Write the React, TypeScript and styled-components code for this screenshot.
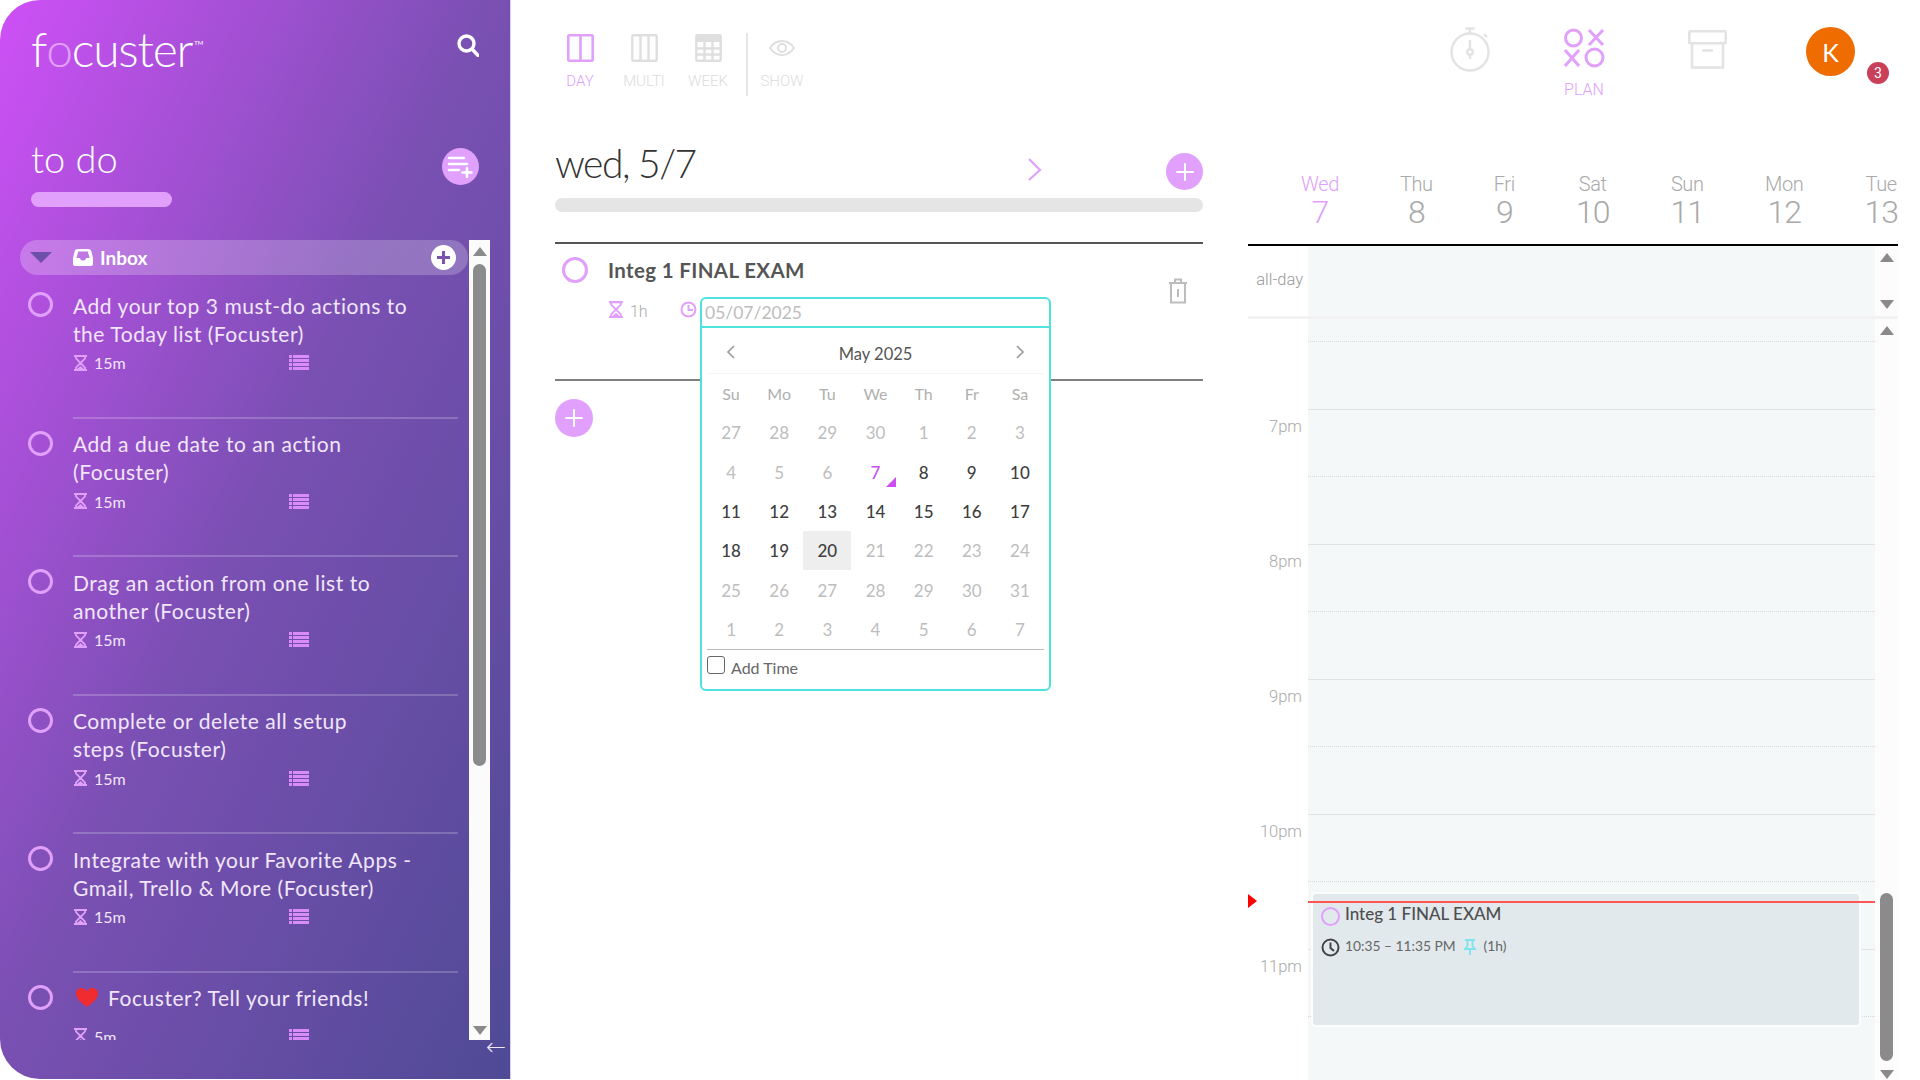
import React from "react";
import styled, { createGlobalStyle } from "styled-components";

const Global = createGlobalStyle`
  html, body { margin: 0; padding: 0; background: #fff; }
  body { font-family: "Lato", "Open Sans", sans-serif; }
  * { box-sizing: border-box; }
`;

const PINK = "#e0a0fb";
const TEAL = "#4fe3e0";
const DIN = `"Roboto", "Liberation Sans", sans-serif`;

const Page = styled.div`
  display: flex;
  width: 1920px;
  height: 1080px;
  overflow: hidden;
  background: #fff;
`;

/* ---------- Sidebar ---------- */
const Sidebar = styled.aside`
  flex: 0 0 511px;
  height: 1079px;
  display: flex;
  flex-direction: column;
  color: #fff;
  border-right: 1px solid #d9cdf0;
  border-radius: 40px 0 0 40px;
  background: linear-gradient(to bottom right, #cf50f7 0%, #7a50b3 48%, #4f4a95 100%);
`;
const SideHeader = styled.div`
  height: 100px;
  padding: 17px 31px 0 31px;
  display: flex;
  justify-content: space-between;
  align-items: flex-start;
`;
const Logo = styled.div`
  font-size: 48px;
  line-height: 64px;
  font-weight: 300;
  letter-spacing: -1.2px;
  color: #fff;
  display: flex;
`;
const LogoO = styled.span`
  color: #e0a0fb;
`;
const Tm = styled.sup`
  font-size: 6px;
  line-height: 7px;
  letter-spacing: 0;
  margin: 22px 0 0 2px;
  font-weight: 400;
`;
const SearchBtn = styled.span`
  display: flex;
  margin-top: 17px;
`;
const TodoRow = styled.div`
  height: 140px;
  padding: 0 31px;
  display: flex;
  justify-content: space-between;
  align-items: flex-start;
`;
const TodoTitle = styled.h1`
  margin: 36px 0 12px;
  font-size: 38px;
  line-height: 44px;
  font-weight: 300;
`;
const TodoPill = styled.div`
  width: 141px;
  height: 15px;
  border-radius: 8px;
  background: ${PINK};
`;
const AddListBtn = styled.span`
  width: 37px;
  height: 37px;
  margin-top: 48px;
  border-radius: 50%;
  background: ${PINK};
  display: flex;
  align-items: center;
  justify-content: center;
`;
const ListWrap = styled.div`
  display: flex;
  height: 800px;
  margin-left: 20px;
`;
const ListArea = styled.div`
  width: 449px;
  overflow: hidden;
`;
const InboxBar = styled.div`
  height: 35px;
  width: 448px;
  border-radius: 18px;
  padding: 0 12px 0 10px;
  display: flex;
  align-items: center;
  background: linear-gradient(90deg, rgba(255,255,255,.24), rgba(255,255,255,.2) 70%, rgba(255,255,255,.22));
`;
const InboxCaret = styled.span`
  width: 0;
  height: 0;
  border-left: 11px solid transparent;
  border-right: 11px solid transparent;
  border-top: 11px solid #6c50a9;
  margin-right: 21px;
`;
const InboxName = styled.span`
  font-size: 19px;
  font-weight: 700;
  margin-left: 7px;
  margin-top: -1px;
  flex: 1;
`;
const Items = styled.div`
  padding-top: 2px;
`;
const Item = styled.div`
  display: flex;
  height: 138.5px;
  padding-left: 8px;
`;
const Ring = styled.span<{ $size: number; $w: number }>`
  flex: none;
  display: block;
  width: ${(p) => p.$size}px;
  height: ${(p) => p.$size}px;
  border: ${(p) => p.$w}px solid ${PINK};
  border-radius: 50%;
`;
const ItemRing = styled(Ring)`
  margin-top: 15px;
  margin-right: 20px;
`;
const ItemBody = styled.div`
  flex: 1;
  height: 141.5px;
  margin-right: 11px;
  padding-top: 14px;
  border-bottom: 2px solid rgba(255, 255, 255, 0.2);
`;
const ItemLine = styled.div<{ $gap?: boolean }>`
  display: flex;
  align-items: center;
  height: 28px;
  margin-bottom: ${(p) => (p.$gap ? 9 : 0)}px;
  font-size: 21px;
  letter-spacing: 0.55px;
  color: #f1e6fb;
  white-space: nowrap;
`;
const HeartIcon = styled.svg`
  margin: 0 10px 0 3px;
`;
const ItemMeta = styled.div`
  display: flex;
  align-items: center;
  height: 28px;
  padding-top: 3px;
`;
const Duration = styled.span`
  width: 216px;
  display: flex;
  align-items: center;
  gap: 6px;
  font-size: 16px;
  color: #f1e6fb;
`;
const SideScroll = styled.div`
  width: 21px;
  height: 800px;
  background: #fbfbfb;
  display: flex;
  flex-direction: column;
  align-items: center;
  padding: 7px 0 5px;
`;
const ArrowUp = styled.span`
  flex: none;
  width: 0;
  height: 0;
  border-left: 7px solid transparent;
  border-right: 7px solid transparent;
  border-bottom: 9px solid #8a8a8a;
`;
const ArrowDown = styled.span`
  flex: none;
  width: 0;
  height: 0;
  border-left: 7px solid transparent;
  border-right: 7px solid transparent;
  border-top: 9px solid #8a8a8a;
`;
const SideThumb = styled.div`
  flex: none;
  width: 13px;
  height: 502px;
  margin-top: 8px;
  margin-bottom: auto;
  border-radius: 7px;
  background: #8b8b8b;
`;
const BackArrow = styled.span`
  align-self: flex-end;
  margin-right: 4px;
  margin-top: -3px;
  font-size: 24px;
  line-height: 20px;
  font-family: "DejaVu Sans", sans-serif;
  font-weight: 300;
  color: #f1e6fb;
`;

/* ---------- Main ---------- */
const Main = styled.main`
  flex: 1;
  min-width: 0;
  display: flex;
  flex-direction: column;
`;
const Toolbar = styled.div`
  flex: none;
  height: 130px;
  padding: 0 22px 0 37px;
  display: flex;
  justify-content: space-between;
  align-items: flex-start;
`;
const ViewGroup = styled.div`
  display: flex;
  align-items: flex-start;
  padding-top: 33px;
`;
const ViewBtn = styled.div<{ $on?: boolean }>`
  width: 64px;
  height: 58px;
  display: flex;
  flex-direction: column;
  align-items: center;
  font-family: ${DIN};
  font-size: 15px;
  font-weight: 300;
  color: ${(p) => (p.$on ? PINK : "#dcdcdc")};
`;
const ViewIcon = styled.span`
  height: 30px;
  margin-bottom: 9px;
  display: flex;
  align-items: center;
`;
const ViewSep = styled.span`
  width: 2px;
  height: 63px;
  margin: 0 2px 0 6px;
  background: #e6e6e6;
`;
const ToolGroup = styled.div`
  display: flex;
  align-items: flex-start;
  padding-top: 27px;
`;
const Tool = styled.div<{ $mr: number }>`
  width: 80px;
  margin-right: ${(p) => p.$mr}px;
  display: flex;
  flex-direction: column;
  align-items: center;
  font-family: ${DIN};
  font-size: 16px;
  font-weight: 300;
  color: ${PINK};
`;
const ToolLabel = styled.span`
  margin-top: 12px;
`;
const ArchiveIcon = styled.svg`
  margin-top: 3px;
`;
const AvatarWrap = styled.div`
  position: relative;
  margin-right: 43px;
`;
const Avatar = styled.div`
  width: 49px;
  height: 49px;
  border-radius: 50%;
  background: #ef6c00;
  color: #fff;
  font-size: 25px;
  display: flex;
  align-items: center;
  justify-content: center;
`;
const Badge = styled.span`
  position: absolute;
  left: 61px;
  top: 35px;
  width: 22px;
  height: 22px;
  border-radius: 50%;
  background: #c9405a;
  color: #fff;
  font-family: ${DIN};
  font-size: 14px;
  display: flex;
  align-items: center;
  justify-content: center;
`;
const Columns = styled.div`
  flex: 1;
  min-height: 0;
  display: flex;
  padding: 0 22px 0 44px;
  gap: 45px;
`;

/* ---------- Day column ---------- */
const DayCol = styled.section`
  width: 648px;
  flex: none;
`;
const DateRow = styled.div`
  height: 68px;
  display: flex;
  align-items: center;
`;
const DateTitle = styled.h2`
  flex: 1;
  margin: 0 0 2px;
  font-size: 39px;
  font-weight: 300;
  color: #333;
  letter-spacing: -1.5px;
`;
const Chevron = styled.span`
  display: flex;
  margin: 10px 124px 0 0;
`;
const PlusCircle = styled.span<{ $size: number }>`
  flex: none;
  width: ${(p) => p.$size}px;
  height: ${(p) => p.$size}px;
  border-radius: 50%;
  background: ${PINK};
  display: flex;
  align-items: center;
  justify-content: center;
`;
const DatePlus = styled(PlusCircle)`
  margin-top: 15px;
`;
const DayProgress = styled.div`
  height: 14px;
  border-radius: 7px;
  background: #e5e5e5;
  margin-bottom: 30px;
`;
const TaskCard = styled.div`
  position: relative;
  height: 139px;
  border-top: 2px solid #555;
  border-bottom: 2px solid #7f7f7f;
  padding: 13px 0 0 7px;
  display: flex;
`;
const TaskRing = styled(Ring)`
  margin-right: 20px;
`;
const TaskBody = styled.div`
  flex: 1;
`;
const TaskTitle = styled.div`
  font-size: 20.5px;
  line-height: 26px;
  font-weight: 700;
  letter-spacing: 0.35px;
  color: #555;
`;
const TaskMeta = styled.div`
  margin-top: 15px;
  display: flex;
  align-items: center;
  gap: 6px;
  font-family: ${DIN};
  font-size: 16px;
  font-weight: 300;
  color: #aaa;
`;
const TaskDur = styled.span`
  margin-top: 4px;
`;
const ClockSlot = styled.span`
  display: flex;
  margin-left: 26px;
`;
const TrashBtn = styled.span`
  position: absolute;
  left: 614px;
  top: 34px;
  display: flex;
`;
const DatePopup = styled.div`
  position: absolute;
  left: 145px;
  top: 53px;
  width: 351px;
  height: 394px;
  background: #fff;
  border: 2px solid ${TEAL};
  border-radius: 6px;
  z-index: 2;
`;
const DateInput = styled.div`
  height: 29px;
  padding-left: 3px;
  border-bottom: 2px solid ${TEAL};
  font-size: 17.5px;
  line-height: 27px;
  color: #bdbdbd;
`;
const CalInner = styled.div`
  padding: 0 5px;
`;
const CalHead = styled.div`
  height: 46px;
  padding: 6px 19px 0;
  display: flex;
  align-items: center;
  justify-content: space-between;
  font-size: 16.5px;
  color: #555;
  border-bottom: 1px solid #f5f5f5;
`;
const CalNav = styled.span`
  display: flex;
  margin-top: -4px;
`;
const CalGrid = styled.div`
  display: grid;
  grid-template-columns: repeat(7, 1fr);
  grid-auto-rows: 39.3px;
  border-bottom: 1px solid #bbb;
`;
const CalDow = styled.div`
  display: flex;
  align-items: center;
  justify-content: center;
  font-size: 16px;
  color: #b0b0b0;
`;
const CalCell = styled.div<{ $kind: string }>`
  position: relative;
  display: flex;
  align-items: center;
  justify-content: center;
  font-size: 17px;
  font-weight: ${(p) => (p.$kind === "on" || p.$kind === "sel" || p.$kind === "today" ? 500 : 400)};
  color: ${(p) =>
    p.$kind === "today" ? "#c94ff0" : p.$kind === "on" || p.$kind === "sel" ? "#3f3f3f" : "#bdbdbd"};
  background: ${(p) => (p.$kind === "sel" ? "#eeeeee" : "transparent")};
`;
const TodayMark = styled.span`
  position: absolute;
  right: 4px;
  bottom: 5px;
  width: 0;
  height: 0;
  border-left: 10px solid transparent;
  border-bottom: 10px solid #c94ff0;
`;
const AddTimeRow = styled.div`
  display: flex;
  align-items: flex-start;
  gap: 6px;
  padding-top: 6px;
  font-size: 16px;
  line-height: 24px;
  color: #666;
`;
const Check = styled.span`
  width: 18px;
  height: 18px;
  border: 1.5px solid #666;
  border-radius: 3px;
`;
const AddBelow = styled(PlusCircle)`
  margin-top: 18px;
`;

/* ---------- Calendar column ---------- */
const CalCol = styled.section`
  flex: 1;
  min-width: 0;
  display: flex;
  flex-direction: column;
`;
const WeekHead = styled.div`
  flex: none;
  height: 116px;
  padding: 41px 0 0 53px;
  border-bottom: 2px solid #000;
  display: flex;
  justify-content: space-between;
  font-family: ${DIN};
  font-weight: 300;
`;
const WeekDay = styled.div<{ $on?: boolean }>`
  display: flex;
  flex-direction: column;
  align-items: center;
  color: ${(p) => (p.$on ? PINK : "#a9a9a9")};
`;
const WeekName = styled.span`
  font-size: 20px;
  line-height: 26px;
  letter-spacing: -0.4px;
`;
const WeekNum = styled.span`
  font-size: 32px;
  line-height: 30px;
  letter-spacing: -1px;
`;
const AllDayRow = styled.div`
  flex: none;
  height: 73px;
  display: flex;
  border-bottom: 3px solid #f2f2f2;
`;
const GutterLabel = styled.div`
  width: 60px;
  padding: 24px 5px 0 0;
  text-align: right;
  font-family: ${DIN};
  font-size: 16.5px;
  font-weight: 300;
  color: #999;
`;
const Lane = styled.div`
  position: relative;
  flex: 1;
  background: #f5f8f9;
`;
const Strip = styled.div`
  flex: none;
  width: 23px;
  background: #fcfcfc;
  display: flex;
  flex-direction: column;
  align-items: center;
  justify-content: space-between;
  padding: 7px 0 7px;
`;
const TimeGrid = styled.div`
  position: relative;
  flex: 1;
  min-height: 0;
  overflow: hidden;
  display: flex;
`;
const HourCol = styled.div`
  width: 60px;
  padding-top: 91px;
`;
const HourLabel = styled.div`
  height: 135px;
  padding-right: 6px;
  text-align: right;
  font-family: ${DIN};
  font-size: 16.5px;
  line-height: 34px;
  font-weight: 300;
  color: #aaa;
`;
const NowMark = styled.span`
  position: absolute;
  left: 0;
  top: 575px;
  width: 0;
  height: 0;
  border-top: 7px solid transparent;
  border-bottom: 7px solid transparent;
  border-left: 9px solid #f00;
`;
const FirstSlot = styled.div`
  height: 23px;
  border-bottom: 1px dotted #d8d8d8;
`;
const Slot = styled.div<{ $solid: boolean }>`
  height: 67.5px;
  border-bottom: 1px ${(p) => (p.$solid ? "solid #e2e2e2" : "dotted #d8d8d8")};
`;
const NowLine = styled.div`
  position: absolute;
  left: 0;
  right: 0;
  top: 582px;
  height: 2px;
  background: #f55;
  z-index: 2;
`;
const EventCard = styled.div`
  position: absolute;
  left: 3px;
  top: 573px;
  width: 550px;
  height: 135px;
  background: #e1e9ec;
  border: 2px solid #fbfcfc;
  border-radius: 5px;
  padding: 8px 0 0 8px;
  color: #4f4f4f;
`;
const EventRow = styled.div`
  display: flex;
  align-items: center;
  gap: 5px;
  height: 28px;
  margin-bottom: 3px;
`;
const EventTitle = styled.span`
  font-size: 17px;
  font-weight: 500;
  margin-top: -6px;
`;
const EventTime = styled.span`
  font-size: 13.8px;
  color: #666;
  margin-top: -4px;
`;
const EventPin = styled.span`
  display: flex;
  margin: 0 3px;
`;
const ScrollCol = styled(Strip)`
  padding-bottom: 1px;
`;
const CalThumb = styled.div`
  width: 13px;
  height: 168px;
  margin-top: auto;
  margin-bottom: 9px;
  border-radius: 7px;
  background: #8b8b8b;
`;

/* ---------- Icons ---------- */
const Hourglass = ({ c = PINK, h = 16 }: { c?: string; h?: number }) => (
  <svg width={(h * 15) / 16} height={h} viewBox="0 0 15 16" fill="none" stroke={c} strokeWidth="1.8">
    <path d="M1 1h13M1 15h13" strokeWidth="2" />
    <path d="M3 1v2.5L7.5 8 3 12.5V15M12 1v2.5L7.5 8l4.5 4.5V15" />
    <path d="M4 14l3.5-3 3.5 3z" fill={c} stroke="none" />
  </svg>
);
const ListIcon = () => (
  <svg width="20" height="15" viewBox="0 0 20 15" fill="#d98cf8">
    <rect x="0" y="0" width="3" height="3" />
    <rect x="4" y="0" width="16" height="3" />
    <rect x="0" y="4" width="3" height="3" />
    <rect x="4" y="4" width="16" height="3" />
    <rect x="0" y="8" width="3" height="3" />
    <rect x="4" y="8" width="16" height="3" />
    <rect x="0" y="12" width="3" height="3" />
    <rect x="4" y="12" width="16" height="3" />
  </svg>
);
const Plus = ({ s, w, c = "#fff" }: { s: number; w: number; c?: string }) => (
  <svg width={s} height={s} viewBox="0 0 20 20" stroke={c} strokeWidth={w} strokeLinecap="round">
    <path d="M10 2v16M2 10h16" />
  </svg>
);
const ChevronSvg = ({ d, c, w, h, sw }: { d: string; c: string; w: number; h: number; sw: number }) => (
  <svg width={w} height={h} viewBox={`0 0 ${w} ${h}`} fill="none" stroke={c} strokeWidth={sw}>
    <path d={d} />
  </svg>
);

type Task = { lines: string[]; dur: string; heart?: boolean };
const tasks: Task[] = [
  { lines: ["Add your top 3 must-do actions to", "the Today list (Focuster)"], dur: "15m" },
  { lines: ["Add a due date to an action", "(Focuster)"], dur: "15m" },
  { lines: ["Drag an action from one list to", "another (Focuster)"], dur: "15m" },
  { lines: ["Complete or delete all setup", "steps (Focuster)"], dur: "15m" },
  { lines: ["Integrate with your Favorite Apps -", "Gmail, Trello & More (Focuster)"], dur: "15m" },
  { lines: ["Focuster? Tell your friends!"], dur: "5m", heart: true },
];

const dows = ["Su", "Mo", "Tu", "We", "Th", "Fr", "Sa"];
const calDays: [number, string][] = [
  ...[27, 28, 29, 30, 1, 2, 3, 4, 5, 6].map((d): [number, string] => [d, "off"]),
  [7, "today"],
  ...[8, 9, 10, 11, 12, 13, 14, 15, 16, 17, 18, 19].map((d): [number, string] => [d, "on"]),
  [20, "sel"],
  ...[21, 22, 23, 24, 25, 26, 27, 28, 29, 30, 31, 1, 2, 3, 4, 5, 6, 7].map((d): [number, string] => [d, "off"]),
];
const week = [
  ["Wed", "7"],
  ["Thu", "8"],
  ["Fri", "9"],
  ["Sat", "10"],
  ["Sun", "11"],
  ["Mon", "12"],
  ["Tue", "13"],
];
const hours = ["7pm", "8pm", "9pm", "10pm", "11pm"];
const slots = Array.from({ length: 11 }, (_, i) => i % 2 === 0);

export default function App() {
  return (
    <Page>
      <Global />
      <Sidebar>
        <SideHeader>
          <Logo>
            f<LogoO>o</LogoO>custer<Tm>TM</Tm>
          </Logo>
          <SearchBtn>
            <svg width="22" height="23" viewBox="0 0 22 23" fill="none" stroke="#fff" strokeWidth="3.4">
              <circle cx="9.5" cy="9.5" r="7.5" />
              <path d="M15 15l6 6.5" strokeLinecap="round" />
            </svg>
          </SearchBtn>
        </SideHeader>
        <TodoRow>
          <div>
            <TodoTitle>to do</TodoTitle>
            <TodoPill />
          </div>
          <AddListBtn>
            <svg width="27" height="23" viewBox="0 0 27 23" fill="none" stroke="#fff" strokeWidth="2.6" strokeLinecap="round">
              <path d="M2 3h15M2 9h18M2 15h10M20 13v9M15.5 17.5h9" />
            </svg>
          </AddListBtn>
        </TodoRow>
        <ListWrap>
          <ListArea>
            <InboxBar>
              <InboxCaret />
              <svg width="20" height="17" viewBox="0 0 20 17" fill="#fff">
                <path d="M5 0h10c2 0 3 1.2 3.4 2.6L20 9v6c0 1.2-.8 2-2 2H2c-1.2 0-2-.8-2-2V9l1.6-6.4C2 1.2 3 0 5 0zm.2 2.5L3.4 9H7c0 1.5 1.3 2.6 3 2.6S13 10.500 13 9h3.600L14.800 2.500z" />
              </svg>
              <InboxName>Inbox</InboxName>
              <svg width="25" height="25" viewBox="0 0 25 25">
                <circle cx="12.500" cy="12.500" r="12.500" fill="#fff" />
                <path d="M12.500 6v13M6 12.500h13" stroke="#7a55b0" strokeWidth="3" />
              </svg>
            </InboxBar>
            <Items>
              {tasks.map((t) => (
                <Item key={t.lines[0]}>
                  <ItemRing $size={25} $w={3} />
                  <ItemBody>
                    {t.lines.map((l) => (
                      <ItemLine key={l} $gap={t.heart}>
                        {t.heart && (
                          <HeartIcon width="22" height="19" viewBox="0 0 22 19">
                            <path
                              d="M11 19C5 14.500 0 10.500 0 5.500 0 2.200 2.500 0 5.500 0 8 0 10 1.400 11 3.500 12 1.400 14 0 16.500 0 19.500 0 22 2.200 22 5.500 22 10.500 17 14.500 11 19z"
                              fill="#f02c30"
                            />
                          </HeartIcon>
                        )}
                        {l}
                      </ItemLine>
                    ))}
                    <ItemMeta>
                      <Duration>
                        <Hourglass />
                        {t.dur}
                      </Duration>
                      <ListIcon />
                    </ItemMeta>
                  </ItemBody>
                </Item>
              ))}
            </Items>
          </ListArea>
          <SideScroll>
            <ArrowUp />
            <SideThumb />
            <ArrowDown />
          </SideScroll>
        </ListWrap>
        <BackArrow>←</BackArrow>
      </Sidebar>

      <Main>
        <Toolbar>
          <ViewGroup>
            <ViewBtn $on>
              <ViewIcon>
                <svg width="27" height="28" viewBox="0 0 27 28" fill="none" stroke={PINK} strokeWidth="2.6">
                  <rect x="1.300" y="1.300" width="24.400" height="25.400" rx="1" />
                  <path d="M13.500 1v26" />
                </svg>
              </ViewIcon>
              DAY
            </ViewBtn>
            <ViewBtn>
              <ViewIcon>
                <svg width="27" height="28" viewBox="0 0 27 28" fill="none" stroke="#dfdfdf" strokeWidth="2.400">
                  <rect x="1.300" y="1.300" width="24.400" height="25.400" rx="1" />
                  <path d="M9.500 1v26M17.500 1v26" />
                </svg>
              </ViewIcon>
              MULTI
            </ViewBtn>
            <ViewBtn>
              <ViewIcon>
                <svg width="27" height="28" viewBox="0 0 27 28" fill="#dfdfdf" stroke="#dfdfdf" strokeWidth="2.400">
                  <rect x="1.300" y="1.300" width="24.400" height="25.400" rx="1" fill="none" />
                  <rect x="1" y="1" width="25" height="7" stroke="none" />
                  <path d="M1 14.500h25M1 20.500h25M9.500 8v19M17.500 8v19" />
                </svg>
              </ViewIcon>
              WEEK
            </ViewBtn>
            <ViewSep />
            <ViewBtn>
              <ViewIcon>
                <svg width="26" height="16" viewBox="0 0 26 16" fill="none" stroke="#dfdfdf" strokeWidth="2">
                  <path d="M1 8c3-4.500 7-7 12-7s9 2.500 12 7c-3 4.500-7 7-12 7S4 12.500 1 8z" />
                  <circle cx="13" cy="8" r="4" />
                </svg>
              </ViewIcon>
              SHOW
            </ViewBtn>
          </ViewGroup>
          <ToolGroup>
            <Tool $mr={34}>
              <svg width="40" height="45" viewBox="0 0 40 45" fill="none" stroke="#e3e3e3" strokeWidth="2.400">
                <circle cx="20" cy="25" r="18.500" />
                <path d="M20 1v5.500M15.500 1.500h9M34 7l3 3" />
                <circle cx="20" cy="25" r="2.800" />
                <path d="M20 13v9M20 28v4" />
              </svg>
            </Tool>
            <Tool $mr={43}>
              <svg width="42" height="41" viewBox="0 0 42 41" fill="none" stroke={PINK} strokeWidth="3">
                <circle cx="10.500" cy="11" r="8" />
                <path d="M26 3l14 15M40 3L26 18M2 23l14 16M16 23L2 39" />
                <circle cx="31.500" cy="30.500" r="8.500" />
              </svg>
              <ToolLabel>PLAN</ToolLabel>
            </Tool>
            <Tool $mr={59}>
              <ArchiveIcon width="39" height="39" viewBox="0 0 39 39" fill="none" stroke="#e3e3e3" strokeWidth="2.600">
                <rect x="1.300" y="1.300" width="36.400" height="12" rx="1" />
                <path d="M4 13.500V37.500H35V13.500M14 20.500h11" />
              </ArchiveIcon>
            </Tool>
            <AvatarWrap>
              <Avatar>K</Avatar>
              <Badge>3</Badge>
            </AvatarWrap>
          </ToolGroup>
        </Toolbar>

        <Columns>
          <DayCol>
            <DateRow>
              <DateTitle>wed, 5/7</DateTitle>
              <Chevron>
                <ChevronSvg d="M2 1l11 11L2 22" c={PINK} w={15} h={23} sw={2.2} />
              </Chevron>
              <DatePlus $size={37}>
                <Plus s={20} w={2} />
              </DatePlus>
            </DateRow>
            <DayProgress />
            <TaskCard>
              <TaskRing $size={26} $w={3} />
              <TaskBody>
                <TaskTitle>Integ 1 FINAL EXAM</TaskTitle>
                <TaskMeta>
                  <Hourglass h={17} />
                  <TaskDur>1h</TaskDur>
                  <ClockSlot>
                    <svg width="17" height="17" viewBox="0 0 17 17" fill="none" stroke={PINK} strokeWidth="2">
                      <circle cx="8.500" cy="8.500" r="7" />
                      <path d="M8.500 4v5H13" />
                    </svg>
                  </ClockSlot>
                </TaskMeta>
              </TaskBody>
              <TrashBtn>
                <svg width="18" height="26" viewBox="0 0 18 26" fill="none" stroke="#bdbdbd" strokeWidth="2">
                  <path d="M0 5h18M6 5V1.500h6V5" />
                  <path d="M2 6v18.500h14V6" />
                  <path d="M9 11v8" />
                </svg>
              </TrashBtn>
              <DatePopup>
                <DateInput>05/07/2025</DateInput>
                <CalInner>
                  <CalHead>
                    <CalNav>
                      <ChevronSvg d="M8 1L2 7l6 6" c="#999" w={10} h={14} sw={1.600} />
                    </CalNav>
                    May 2025
                    <CalNav>
                      <ChevronSvg d="M2 1l6 6-6 6" c="#999" w={10} h={14} sw={1.600} />
                    </CalNav>
                  </CalHead>
                  <CalGrid>
                    {dows.map((d) => (
                      <CalDow key={d}>{d}</CalDow>
                    ))}
                    {calDays.map(([d, k], i) => (
                      <CalCell key={i} $kind={k}>
                        {d}
                        {k === "today" && <TodayMark />}
                      </CalCell>
                    ))}
                  </CalGrid>
                  <AddTimeRow>
                    <Check />
                    <span>Add Time</span>
                  </AddTimeRow>
                </CalInner>
              </DatePopup>
            </TaskCard>
            <AddBelow $size={38}>
              <Plus s={20} w={2} />
            </AddBelow>
          </DayCol>

          <CalCol>
            <WeekHead>
              {week.map(([n, d], i) => (
                <WeekDay key={n} $on={i === 0}>
                  <WeekName>{n}</WeekName>
                  <WeekNum>{d}</WeekNum>
                </WeekDay>
              ))}
            </WeekHead>
            <AllDayRow>
              <GutterLabel>all-day</GutterLabel>
              <Lane />
              <Strip>
                <ArrowUp />
                <ArrowDown />
              </Strip>
            </AllDayRow>
            <TimeGrid>
              <HourCol>
                {hours.map((h) => (
                  <HourLabel key={h}>{h}</HourLabel>
                ))}
              </HourCol>
              <NowMark />
              <Lane>
                <FirstSlot />
                {slots.map((s, i) => (
                  <Slot key={i} $solid={s} />
                ))}
                <EventCard>
                  <EventRow>
                    <Ring $size={19} $w={2} />
                    <EventTitle>Integ 1 FINAL EXAM</EventTitle>
                  </EventRow>
                  <EventRow>
                    <svg width="19" height="19" viewBox="0 0 19 19" fill="none" stroke="#444" strokeWidth="2">
                      <circle cx="9.500" cy="9.500" r="8" />
                      <path d="M9.500 4.500v5.500l3.500 3" />
                    </svg>
                    <EventTime>10:35 – 11:35 PM</EventTime>
                    <EventPin>
                      <svg width="12" height="16" viewBox="0 0 12 16" fill="none" stroke="#7fe3ee" strokeWidth="1.800">
                        <path d="M1 1h10M3.500 1v6L1 10h10L8.500 7V1M6 10v6" />
                      </svg>
                    </EventPin>
                    <EventTime>(1h)</EventTime>
                  </EventRow>
                </EventCard>
                <NowLine />
              </Lane>
              <ScrollCol>
                <ArrowUp />
                <CalThumb />
                <ArrowDown />
              </ScrollCol>
            </TimeGrid>
          </CalCol>
        </Columns>
      </Main>
    </Page>
  );
}
